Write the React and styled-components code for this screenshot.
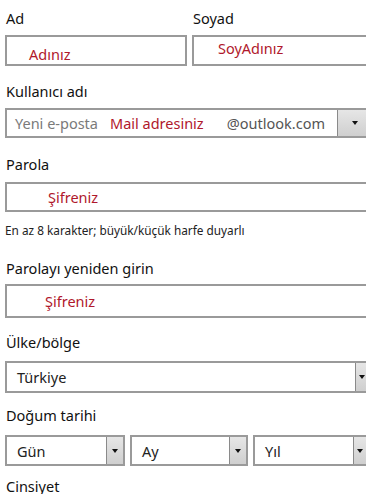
import React from "react";
import styled, { createGlobalStyle } from "styled-components";

const GlobalStyle = createGlobalStyle`
  html, body {
    margin: 0;
    padding: 0;
    background: #ffffff;
    overflow: hidden;
  }
  body {
    font-family: "Noto Sans", "Open Sans", sans-serif;
    color: #1a1a1a;
  }
`;

const Form = styled.div`
  width: 400px;
  padding: 9px 0 0 5px;
  display: flex;
  flex-direction: column;
`;

const Label = styled.div`
  font-size: 14.5px;
  line-height: 18px;
  height: 18px;
  padding-left: 1px;
  margin-top: ${(p) => p.top || 0}px;
  margin-bottom: ${(p) => p.gap || 8}px;
  color: #111;
  white-space: nowrap;
`;

const Row = styled.div`
  display: grid;
  grid-template-columns: 182px 200px;
  column-gap: 5px;
`;

const Col = styled.div`
  display: flex;
  flex-direction: column;
`;

const Box = styled.div`
  box-sizing: border-box;
  height: ${(p) => p.h || 31}px;
  width: ${(p) => (p.w ? `${p.w}px` : "100%")};
  border: 2px solid #9a9a9a;
  background: #fff;
  display: flex;
  align-items: center;
  padding-left: ${(p) => p.pad || 8}px;
  font-size: 14.5px;
  white-space: nowrap;
  overflow: hidden;
`;

const Red = styled.span`
  color: #b0182c;
  position: relative;
  top: ${(p) => p.dy || 0}px;
`;

const Placeholder = styled.span`
  color: #7a7a7a;
`;

const Suffix = styled.span`
  color: #555;
  margin-left: auto;
  padding-right: 12px;
`;

const Value = styled.span`
  color: #222;
`;

const Combo = styled.div`
  box-sizing: border-box;
  height: ${(p) => p.h || 31}px;
  width: ${(p) => p.w}px;
  border: 2px solid #9a9a9a;
  background: #fff;
  display: flex;
  align-items: stretch;
  font-size: 14.5px;
  white-space: nowrap;
  overflow: hidden;
`;

const ComboText = styled.div`
  flex: 1;
  display: flex;
  align-items: center;
  padding-left: ${(p) => p.pad || 8}px;
  overflow: hidden;
`;

const ArrowBtn = styled.div`
  width: ${(p) => p.w || 16}px;
  flex: none;
  box-sizing: border-box;
  border-left: 1px solid #8a8a8a;
  background: linear-gradient(#e6e6e6, #cfcfcf);
  display: flex;
  align-items: center;
  justify-content: ${(p) => (p.inset ? "flex-start" : "center")};
  padding-left: ${(p) => p.inset || 0}px;
`;

const Tri = styled.span`
  width: 0;
  height: 0;
  border-left: 3.5px solid transparent;
  border-right: 3.5px solid transparent;
  border-top: 4px solid #111;
`;

const Hint = styled.div`
  font-size: 11.8px;
  line-height: 14px;
  margin-top: 11px;
  color: #222;
  white-space: nowrap;
`;

const Dates = styled.div`
  display: grid;
  grid-template-columns: 120px 118px 128px;
  column-gap: 5px;
`;

function Arrow({ w, inset }) {
  return (
    <ArrowBtn w={w} inset={inset}>
      <Tri />
    </ArrowBtn>
  );
}

export default function App() {
  return (
    <>
      <GlobalStyle />
      <Form>
        <Row>
          <Col>
            <Label>Ad</Label>
            <Box pad={22}>
              <Red dy={3}>Adınız</Red>
            </Box>
          </Col>
          <Col>
            <Label>Soyad</Label>
            <Box pad={24}>
              <Red dy={-3}>SoyAdınız</Red>
            </Box>
          </Col>
        </Row>

        <Label top={16} gap={8}>Kullanıcı adı</Label>
        <Combo w={381} h={30}>
          <ComboText pad={8}>
            <Placeholder>Yeni e-posta</Placeholder>
            <Red style={{ marginLeft: 12 }}>Mail adresiniz</Red>
            <Suffix>@outlook.com</Suffix>
          </ComboText>
          <Arrow w={47} inset={14} />
        </Combo>

        <Label top={17} gap={9}>Parola</Label>
        <Box w={380} h={30} pad={41}>
          <Red>Şifreniz</Red>
        </Box>
        <Hint>En az 8 karakter; büyük/küçük harfe duyarlı</Hint>

        <Label top={22} gap={7}>Parolayı yeniden girin</Label>
        <Box w={380} h={34} pad={38}>
          <Red>Şifreniz</Red>
        </Box>

        <Label top={15} gap={10}>Ülke/bölge</Label>
        <Combo w={378} h={32}>
          <ComboText pad={10}>
            <Value>Türkiye</Value>
          </ComboText>
          <Arrow w={26} inset={3} />
        </Combo>

        <Label top={13} gap={11}>Doğum tarihi</Label>
        <Dates>
          <Combo w={120}>
            <ComboText pad={10}>
              <Value>Gün</Value>
            </ComboText>
            <Arrow w={17} />
          </Combo>
          <Combo w={118}>
            <ComboText pad={10}>
              <Value>Ay</Value>
            </ComboText>
            <Arrow w={17} />
          </Combo>
          <Combo w={128}>
            <ComboText pad={10}>
              <Value>Yıl</Value>
            </ComboText>
            <Arrow w={26} inset={3} />
          </Combo>
        </Dates>

        <Label top={11}>Cinsiyet</Label>
      </Form>
    </>
  );
}
